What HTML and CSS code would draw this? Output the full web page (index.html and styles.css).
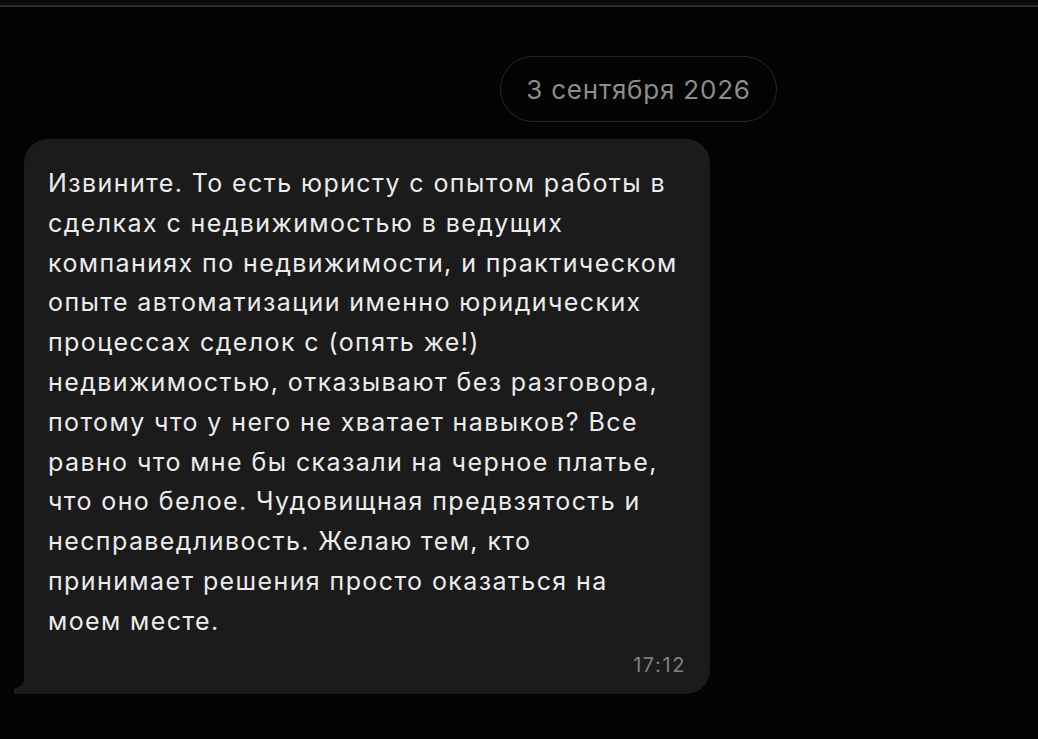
FILE: index.html
```html
<!DOCTYPE html>
<html lang="ru">
<head>
<meta charset="utf-8">
<link rel="stylesheet" href="styles.css">
</head>
<body>
<div class="topbar"></div>
<div class="chat">
  <div class="date-row">
    <div class="date-pill">3 сентября 2026</div>
  </div>
  <div class="msg-row">
    <div class="bubble">
      <p class="text">Извините. То есть юристу с опытом работы в<br>сделках с недвижимостью в ведущих<br>компаниях по недвижимости, и практическом<br>опыте автоматизации именно юридических<br>процессах сделок с (опять же!)<br>недвижимостью, отказывают без разговора,<br>потому что у него не хватает навыков? Все<br>равно что мне бы сказали на черное платье,<br>что оно белое. Чудовищная предвзятость и<br>несправедливость. Желаю тем, кто<br>принимает решения просто оказаться на<br>моем месте.</p>
      <div class="time">17:12</div>
    </div>
  </div>
</div>
</body>
</html>
```

FILE: styles.css
```css
html, body {
  margin: 0;
  padding: 0;
  background: #030303;
  height: 100%;
  overflow: hidden;
}
body {
  font-family: Inter, "Noto Sans", "Liberation Sans", sans-serif;
}
.topbar {
  height: 5px;
  background: #0a0a0a;
  border-bottom: 2px solid #2a2a2a;
}
.chat {
  display: flex;
  flex-direction: column;
}
.date-row {
  display: flex;
  justify-content: flex-end;
  padding: 49px 261px 0 0;
}
.date-pill {
  box-sizing: border-box;
  width: 277px;
  height: 66px;
  border: 1.5px solid #262626;
  border-radius: 33px;
  display: flex;
  align-items: center;
  justify-content: center;
  color: #8c8c8c;
  font-size: 26px;
  letter-spacing: 0.8px;
}
.msg-row {
  display: flex;
  padding: 17px 0 0 24px;
}
.bubble {
  position: relative;
  box-sizing: border-box;
  width: 686px;
  height: 555px;
  background: #1b1b1b;
  border-radius: 24px 24px 24px 0;
  padding: 25px 10px 0 24px;
}
.bubble::before {
  content: "";
  position: absolute;
  left: -10px;
  bottom: 0;
  width: 10px;
  height: 16px;
  background: radial-gradient(circle at 0 0, transparent 10px, #1b1b1b 10.5px);
}
.text {
  margin: 0;
  color: #ececec;
  font-size: 25px;
  font-weight: 425;
  line-height: 39.8px;
  letter-spacing: 1.4px;
  white-space: nowrap;
}
.time {
  text-align: right;
  padding-right: 14px;
  margin-top: 11px;
  color: #7f7f7f;
  font-size: 20px;
  letter-spacing: 1.6px;
}
```
